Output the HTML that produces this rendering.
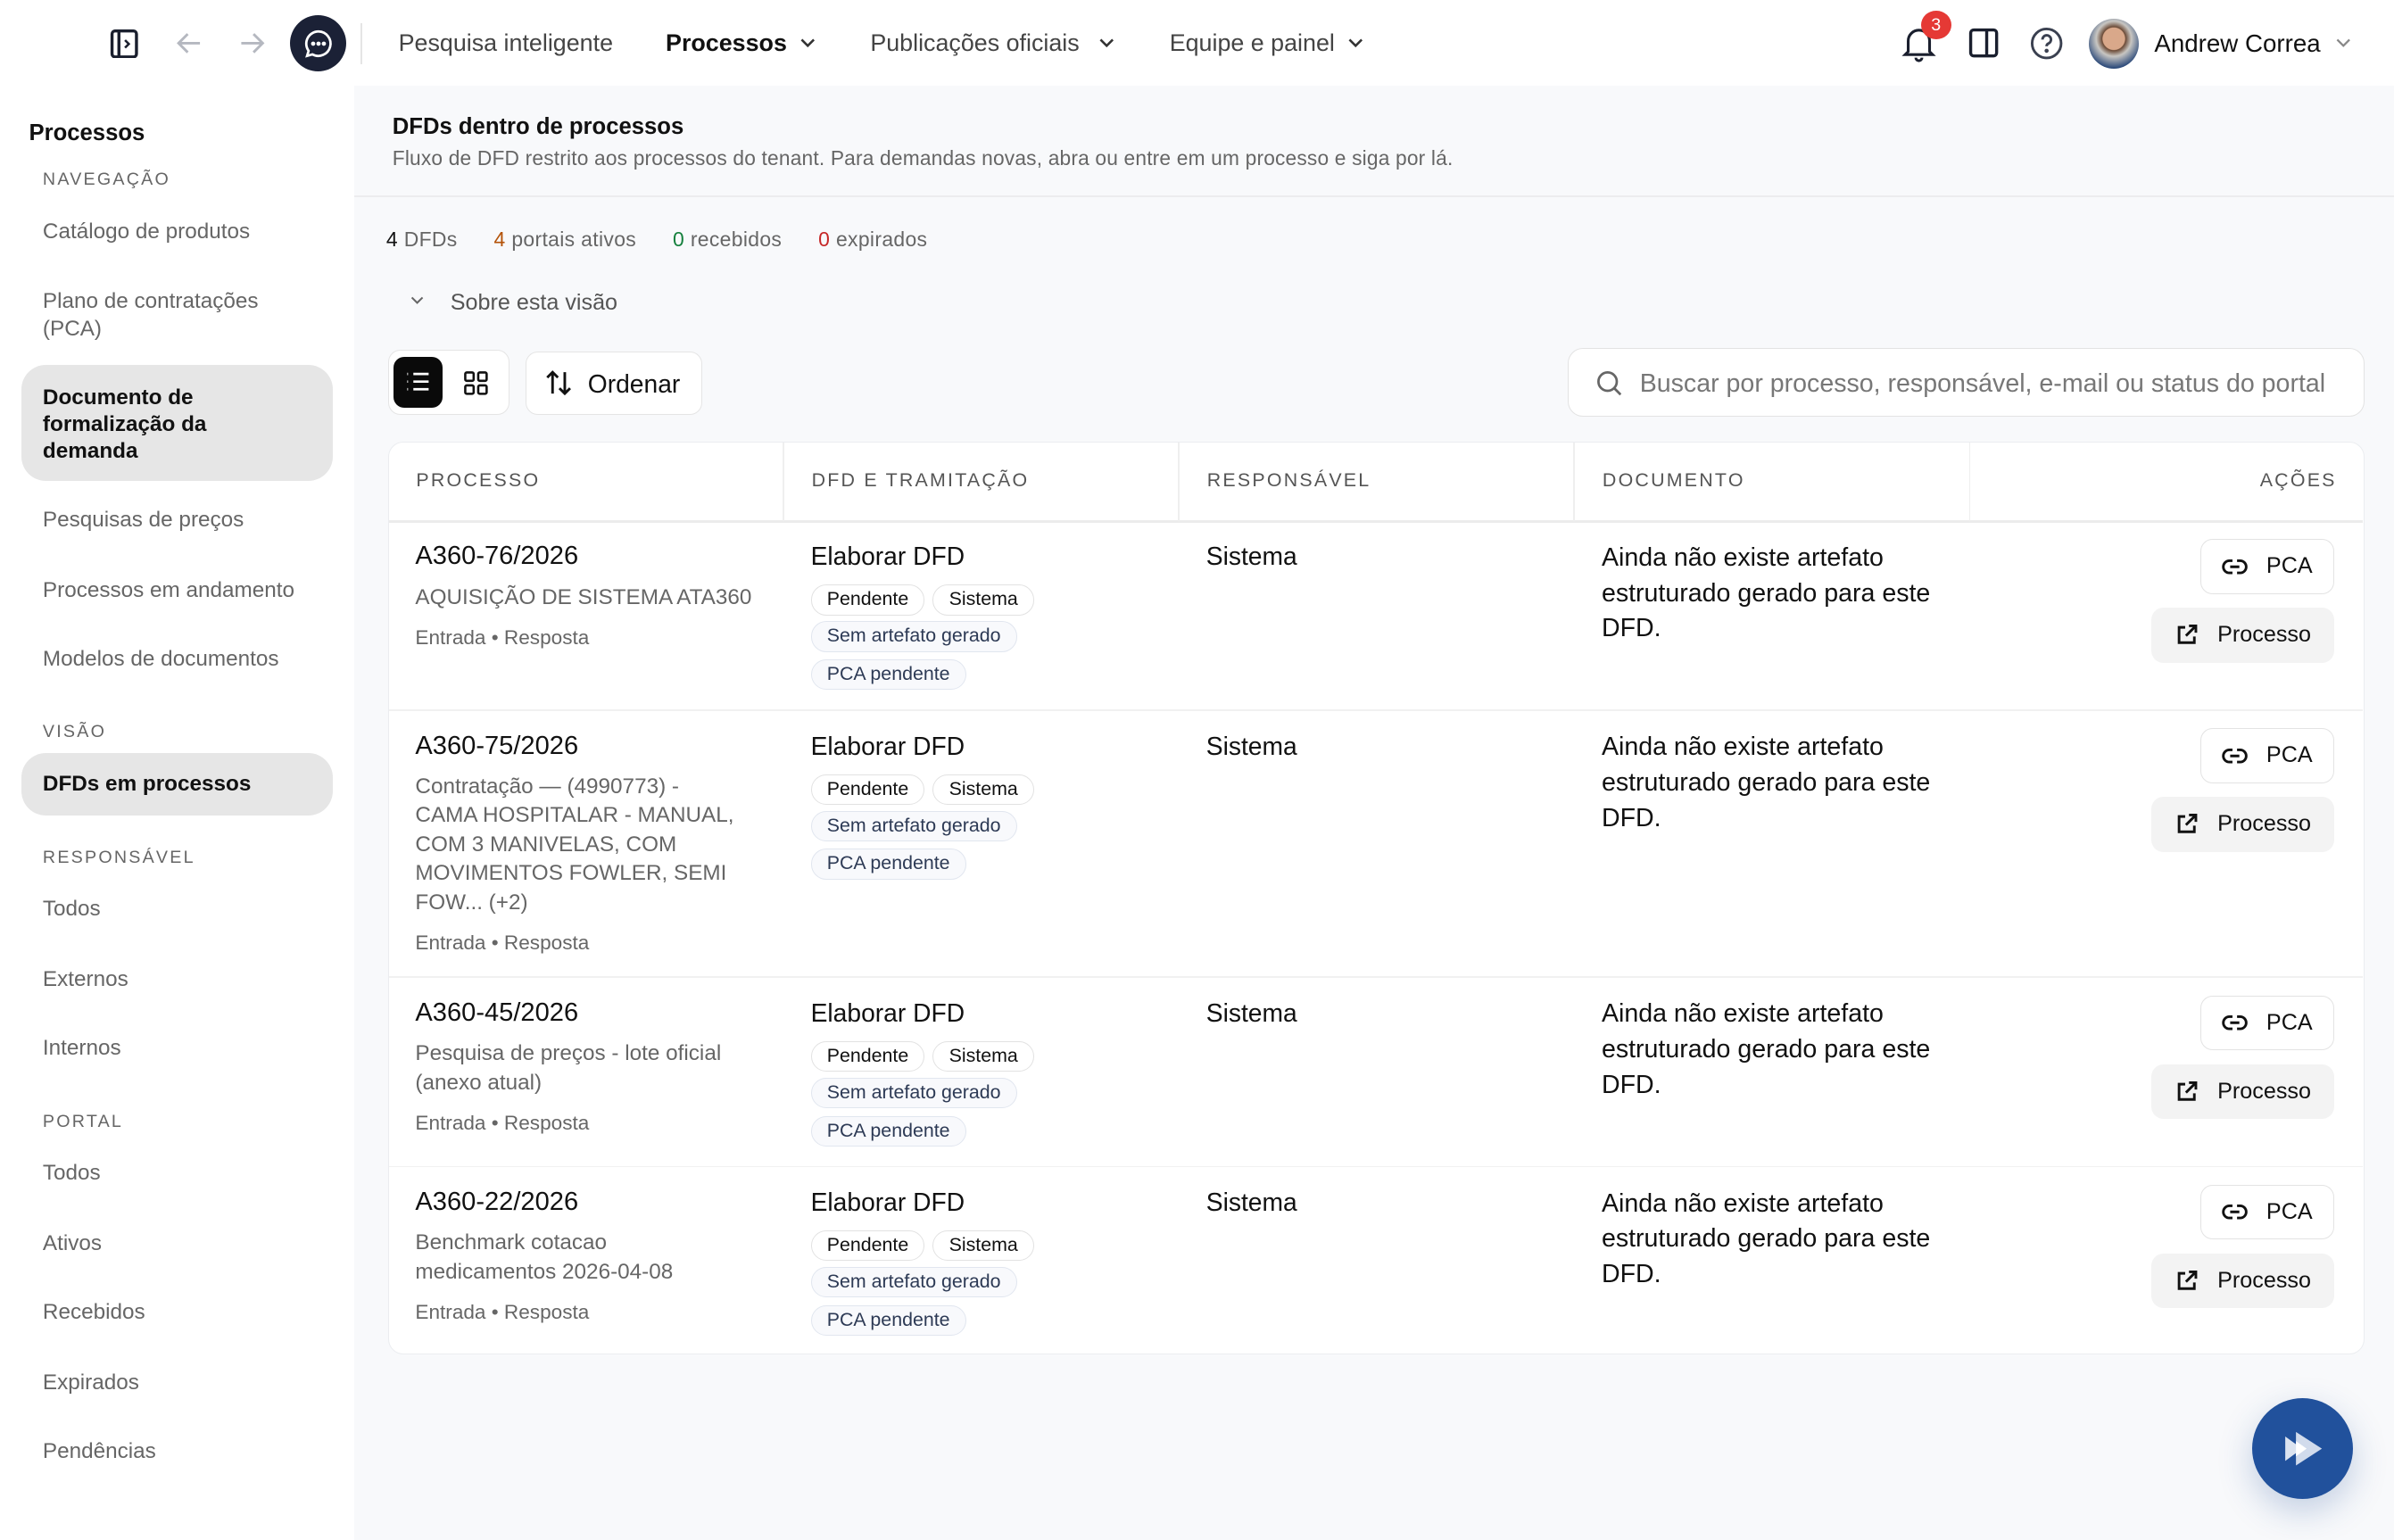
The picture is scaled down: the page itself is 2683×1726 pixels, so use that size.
<!DOCTYPE html>
<html><head><meta charset="utf-8">
<style>
*{box-sizing:border-box;margin:0;padding:0}
html,body{width:2683px;height:1726px;overflow:hidden;background:#fff}
#root{zoom:1.71110;width:1568px;height:1009px;position:relative;font-family:"Liberation Sans",sans-serif;color:#111;background:#fff}
.a{position:absolute;white-space:nowrap}
.top{position:absolute;left:0;top:0;width:1568px;height:56px;background:#fff}
.nav{font-size:15.7px;color:#444;top:19px}
.side{position:absolute;left:0;top:56px;width:232px;height:953px;background:#fff}
.main{position:absolute;left:232px;top:56px;width:1336px;height:953px;background:#f8f9fb}
.sl{font-size:11.5px;letter-spacing:1.3px;color:#666;left:28px}
.si{font-size:14.2px;color:#666;left:28px;line-height:18px}
.act{position:absolute;left:14px;width:204px;background:#e6e6e6;border-radius:16px}
.card{position:absolute;left:254px;top:289px;width:1295px;height:598px;background:#fff;border:1px solid #ebedf0;border-radius:10px}
.th{font-size:12.5px;letter-spacing:1.3px;color:#555;top:18px}
.chip{position:absolute;left:531px;height:20px;border:1px solid #e2e2e2;border-radius:10px;font-size:12.5px;line-height:18px;padding:0 10px;white-space:nowrap;background:#fff;color:#111}
.chip.b{border-color:#e1e6ef;background:#f8f9fc;color:#2d3a55}
.btn{position:absolute;height:36px;border-radius:8px;font-size:14.7px;display:flex;align-items:center;gap:12px;justify-content:center}
.pca{left:1441px;width:88px;border:1px solid #e3e3e3;background:#fff}
.pro{left:1409px;width:120px;background:#f3f3f3}
.t17{font-size:17px;color:#111}
.g{color:#666}
</style></head><body><div id="root">
<div class="top">
 <svg class="a" style="left:72px;top:19px" width="20" height="19" viewBox="0 0 20 19" fill="none" stroke="#1a1f2e" stroke-width="2"><rect x="1.5" y="1" width="16" height="17" rx="2"/><line x1="6" y1="1" x2="6" y2="18"/><path d="M10 7l2.5 2.5L10 12" stroke-width="1.5"/></svg>
 <svg class="a" style="left:114px;top:19px" width="19" height="18" viewBox="0 0 19 18" fill="none" stroke="#b5b8c0" stroke-width="1.7"><path d="M17 9H3M9 3L3 9l6 6"/></svg>
 <svg class="a" style="left:156px;top:19px" width="19" height="18" viewBox="0 0 19 18" fill="none" stroke="#b5b8c0" stroke-width="1.7"><path d="M2 9h14M10 3l6 6-6 6"/></svg>
 <div class="a" style="left:190px;top:10px;width:37px;height:37px;border-radius:50%;background:#1b2136"></div>
 <svg class="a" style="left:198px;top:18px" width="21" height="21" viewBox="0 0 21 21" fill="none" stroke="#fff" stroke-width="1.6"><path d="M10.5 2.5a8 8 0 1 1-4 15l-3.5 1 1-3.3a8 8 0 0 1 6.5-12.7z"/><circle cx="7" cy="10.5" r=".6" fill="#fff"/><circle cx="10.5" cy="10.5" r=".6" fill="#fff"/><circle cx="14" cy="10.5" r=".6" fill="#fff"/></svg>
 <div class="a" style="left:236px;top:15px;width:1px;height:27px;background:#e5e5e5"></div>
 <div class="a nav" style="left:261px">Pesquisa inteligente</div>
 <div class="a nav" style="left:436px;color:#111;font-weight:bold">Processos</div>
 <svg class="a" style="left:523px;top:24px" width="12" height="9" viewBox="0 0 12 9" fill="none" stroke="#333" stroke-width="1.5"><path d="M2 2l4 4 4-4"/></svg>
 <div class="a nav" style="left:570px">Publicações oficiais</div>
 <svg class="a" style="left:719px;top:24px" width="12" height="9" viewBox="0 0 12 9" fill="none" stroke="#333" stroke-width="1.5"><path d="M2 2l4 4 4-4"/></svg>
 <div class="a nav" style="left:766px">Equipe e painel</div>
 <svg class="a" style="left:882px;top:24px" width="12" height="9" viewBox="0 0 12 9" fill="none" stroke="#333" stroke-width="1.5"><path d="M2 2l4 4 4-4"/></svg>
 <svg class="a" style="left:1245px;top:16px" width="24" height="26" viewBox="0 0 24 26" fill="none" stroke="#1a1f2e" stroke-width="1.8"><path d="M5 18V11a7 7 0 0 1 14 0v7l2 2H3z"/><path d="M10 22a2 2 0 0 0 4 0"/></svg>
 <div class="a" style="left:1258px;top:7px;width:20px;height:19px;border-radius:50%;background:#e53935;color:#fff;font-size:11.5px;text-align:center;line-height:19px">3</div>
 <svg class="a" style="left:1289px;top:18px" width="21" height="20" viewBox="0 0 21 20" fill="none" stroke="#1a1f2e" stroke-width="2"><rect x="1.5" y="1.5" width="17" height="17" rx="2"/><line x1="12" y1="1.5" x2="12" y2="18.5"/></svg>
 <svg class="a" style="left:1329px;top:17px" width="23" height="23" viewBox="0 0 23 23" fill="none" stroke="#3a4050" stroke-width="1.7"><circle cx="11.5" cy="11.5" r="9.5"/><path d="M8.8 9a2.8 2.8 0 1 1 3.8 2.6c-.8.4-1.1.9-1.1 1.8"/><circle cx="11.5" cy="16.3" r=".5" fill="#3a4050"/></svg>
 <div class="a" style="left:1368px;top:12px;width:33px;height:33px;border-radius:50%;background:radial-gradient(circle at 50% 40%,#d9a88a 0 28%,#6b4a36 30%,#c8c6c2 45%,#2c4a7a 75%)"></div>
 <div class="a" style="left:1411px;top:19px;font-size:16.2px;color:#111">Andrew Correa</div>
 <svg class="a" style="left:1529px;top:24px" width="12" height="9" viewBox="0 0 12 9" fill="none" stroke="#888" stroke-width="1.3"><path d="M2 2l4 4 4-4"/></svg>
</div>
<div class="side">
 <div class="a" style="left:19px;top:23px;font-size:15px;font-weight:bold">Processos</div>
 <div class="a sl" style="top:55px">NAVEGAÇÃO</div>
 <div class="a si" style="top:87px">Catálogo de produtos</div>
 <div class="a si" style="top:133px">Plano de contratações<br>(PCA)</div>
 <div class="act" style="top:183px;height:76px"></div>
 <div class="a si" style="top:196px;color:#111;font-weight:bold;line-height:17.5px">Documento de<br>formalização da<br>demanda</div>
 <div class="a si" style="top:276px">Pesquisas de preços</div>
 <div class="a si" style="top:322px">Processos em andamento</div>
 <div class="a si" style="top:367px">Modelos de documentos</div>
 <div class="a sl" style="top:417px">VISÃO</div>
 <div class="act" style="top:437px;height:41px"></div>
 <div class="a si" style="top:449px;color:#111;font-weight:bold">DFDs em processos</div>
 <div class="a sl" style="top:499px">RESPONSÁVEL</div>
 <div class="a si" style="top:531px">Todos</div>
 <div class="a si" style="top:577px">Externos</div>
 <div class="a si" style="top:622px">Internos</div>
 <div class="a sl" style="top:672px">PORTAL</div>
 <div class="a si" style="top:704px">Todos</div>
 <div class="a si" style="top:750px">Ativos</div>
 <div class="a si" style="top:795px">Recebidos</div>
 <div class="a si" style="top:841px">Expirados</div>
 <div class="a si" style="top:886px">Pendências</div>
</div>
<div class="main">
 <div class="a" style="left:0;top:72px;width:1336px;height:1px;background:#ececee"></div>
</div>
<div class="a" style="left:257px;top:75px;font-size:15px;font-weight:bold;color:#111">DFDs dentro de processos</div>
<div class="a" style="left:257px;top:96px;font-size:13.3px;color:#666;letter-spacing:0.1px">Fluxo de DFD restrito aos processos do tenant. Para demandas novas, abra ou entre em um processo e siga por lá.</div>
<div class="a" style="left:253px;top:149px;font-size:13.4px;color:#666;letter-spacing:0.2px"><b style="color:#111;font-weight:normal">4</b> DFDs <span style="margin-left:20px;color:#b45309">4</span> portais ativos <span style="margin-left:20px;color:#15803d">0</span> recebidos <span style="margin-left:20px;color:#c62828">0</span> expirados</div>
<svg class="a" style="left:268px;top:193px" width="10" height="8" viewBox="0 0 10 8" fill="none" stroke="#666" stroke-width="1.2"><path d="M1.5 2l3.5 3.5L8.5 2"/></svg>
<div class="a" style="left:295px;top:190px;font-size:14.7px;color:#555">Sobre esta visão</div>
<div class="a" style="left:254px;top:229px;width:80px;height:43px;background:#fff;border:1px solid #e5e5e5;border-radius:8px"></div>
<div class="a" style="left:258px;top:234px;width:32px;height:33px;background:#0a0a0a;border-radius:7px"></div>
<svg class="a" style="left:265px;top:242px" width="18" height="16" viewBox="0 0 18 16" fill="none" stroke="#fff" stroke-width="1.6"><path d="M6 3h10M6 8h10M6 13h10M2 3h.5M2 8h.5M2 13h.5"/></svg>
<svg class="a" style="left:303px;top:242px" width="18" height="18" viewBox="0 0 18 18" fill="none" stroke="#111" stroke-width="1.5"><rect x="2" y="2" width="5.5" height="5.5" rx="1"/><rect x="10.5" y="2" width="5.5" height="5.5" rx="1"/><rect x="2" y="10.5" width="5.5" height="5.5" rx="1"/><rect x="10.5" y="10.5" width="5.5" height="5.5" rx="1"/></svg>
<div class="a" style="left:344px;top:230px;width:116px;height:42px;background:#fff;border:1px solid #e5e5e5;border-radius:8px"></div>
<svg class="a" style="left:356px;top:241px" width="20" height="20" viewBox="0 0 20 20" fill="none" stroke="#111" stroke-width="1.7"><path d="M6 17V3M2.5 6.5L6 3l3.5 3.5M14 3v14M10.5 13.5L14 17l3.5-3.5"/></svg>
<div class="a" style="left:385px;top:242px;font-size:16.5px;color:#111">Ordenar</div>
<div class="a" style="left:1027px;top:228px;width:522px;height:45px;background:#fff;border:1px solid #e3e3e3;border-radius:10px"></div>
<svg class="a" style="left:1045px;top:242px" width="18" height="18" viewBox="0 0 18 18" fill="none" stroke="#666" stroke-width="1.6"><circle cx="8" cy="8" r="6"/><path d="M12.5 12.5L16.5 16.5"/></svg>
<div class="a" style="left:1074px;top:242px;font-size:16.7px;color:#777">Buscar por processo, responsável, e-mail ou status do portal</div>

<div class="card">
 <div class="a" style="left:0;top:51px;width:1293px;height:2px;background:#ececec"></div>
 <div class="a" style="left:258px;top:0;width:1px;height:52px;background:#efefef"></div>
 <div class="a" style="left:517px;top:0;width:1px;height:52px;background:#efefef"></div>
 <div class="a" style="left:776px;top:0;width:1px;height:52px;background:#efefef"></div>
 <div class="a" style="left:1035px;top:0;width:1px;height:52px;background:#efefef"></div>
 <div class="a th" style="left:18px">PROCESSO</div>
 <div class="a th" style="left:277px">DFD E TRAMITAÇÃO</div>
 <div class="a th" style="left:536px">RESPONSÁVEL</div>
 <div class="a th" style="left:795px">DOCUMENTO</div>
 <div class="a th" style="right:18px">AÇÕES</div>
 <div class="a" style="left:0;top:350px;width:1293px;height:1px;background:#f1f1f1"></div>
 <div class="a" style="left:0;top:175px;width:1293px;height:1px;background:#f1f1f1"></div>
 <div class="a" style="left:0;top:474px;width:1293px;height:1px;background:#f1f1f1"></div>
</div>

<div id="rows"></div>
<script>
var rows=[[341,'A360-76/2026',['AQUISIÇÃO DE SISTEMA ATA360']],[465,'A360-75/2026',['Contratação — (4990773) -','CAMA HOSPITALAR - MANUAL,','COM 3 MANIVELAS, COM','MOVIMENTOS FOWLER, SEMI','FOW... (+2)']],[640,'A360-45/2026',['Pesquisa de preços - lote oficial','(anexo atual)']],[764,'A360-22/2026',['Benchmark cotacao','medicamentos 2026-04-08']]];
var h='';
var link='<svg width="17" height="12" viewBox="0 0 17 12" fill="none" stroke="#111" stroke-width="1.7"><path d="M7 2H5a4 4 0 0 0 0 8h2M10 2h2a4 4 0 0 1 0 8h-2M5.5 6h6"/></svg>';
var ext='<svg width="16" height="16" viewBox="0 0 16 16" fill="none" stroke="#111" stroke-width="1.7"><path d="M7 3H3v10h10V9M9.5 2H14v4.5M14 2L7.5 8.5"/></svg>';
rows.forEach(function(r){var t=r[0];
h+='<div class="a t17" style="left:272px;top:'+(t+14)+'px">'+r[1]+'</div>';
h+='<div class="a g" style="left:272px;top:'+(t+41)+'px;font-size:14.2px;line-height:19px">'+r[2].join('<br>')+'</div>';
h+='<div class="a g" style="left:272px;top:'+(t+41+r[2].length*19+9)+'px;font-size:13.2px">Entrada • Resposta</div>';
h+='<div class="a t17" style="left:531px;top:'+(t+14)+'px;font-size:16.5px">Elaborar DFD</div>';
h+='<div class="chip" style="top:'+(t+42)+'px">Pendente</div><div class="chip" style="left:611px;top:'+(t+42)+'px">Sistema</div>';
h+='<div class="chip b" style="top:'+(t+66)+'px">Sem artefato gerado</div><div class="chip b" style="top:'+(t+91)+'px">PCA pendente</div>';
h+='<div class="a t17" style="left:790px;top:'+(t+14)+'px;font-size:16.5px">Sistema</div>';
h+='<div class="a" style="left:1049px;top:'+(t+13)+'px;font-size:16.7px;line-height:23.3px">Ainda não existe artefato<br>estruturado gerado para este<br>DFD.</div>';
h+='<div class="btn pca" style="top:'+(t+12)+'px">'+link+'<span>PCA</span></div>';
h+='<div class="btn pro" style="top:'+(t+57)+'px">'+ext+'<span>Processo</span></div>';
});
document.getElementById('rows').innerHTML=h;
</script>
<div class="a" style="left:1475px;top:916px;width:66px;height:66px;border-radius:50%;background:#21519c;box-shadow:0 8px 22px rgba(33,81,156,.25)"></div>
<svg class="a" style="left:1494px;top:934px" width="30" height="30" viewBox="0 0 30 30"><path d="M3 7l11 8-11 8z" fill="#dbe3f0"/><path d="M10 4l17 11-17 11z" fill="#dbe3f0" opacity=".95"/><path d="M10 10l7 5-7 5z" fill="#fff"/></svg>
</div></body></html>
